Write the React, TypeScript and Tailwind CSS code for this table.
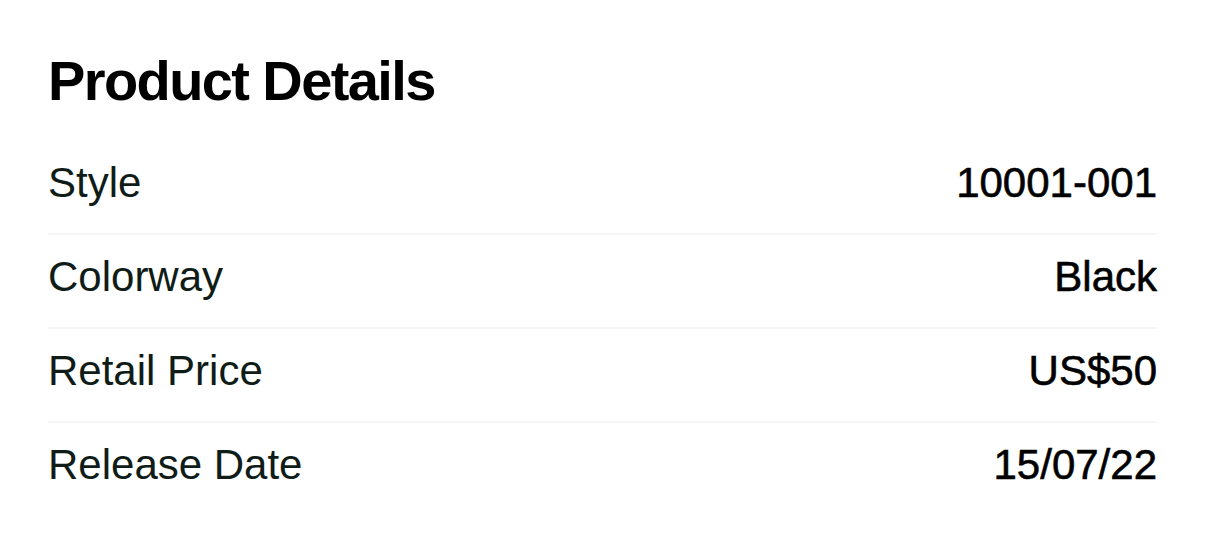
import React from "react";

const rows = [
  ["Style", "10001-001"],
  ["Colorway", "Black"],
  ["Retail Price", "US$50"],
  ["Release Date", "15/07/22"],
];

export default function App() {
  return (
    <div
      className="w-[1206px] h-[543px] bg-white pl-[48px] pr-[49px] pt-[51px]"
      style={{ fontFamily: "'Liberation Sans', Arial, sans-serif" }}
    >
      <h1 className="text-[56px] leading-[60px] font-bold text-black tracking-[-1.6px]">
        Product Details
      </h1>
      <div className="mt-[30px]">
        {rows.map(([k, v], i) => (
          <div
            key={k}
            className={`flex items-start justify-between pt-[18px] pb-[26px] ${
              i < rows.length - 1 ? "border-b-2 border-[#f4f5f5]" : ""
            }`}
          >
            <span className="text-[42px] leading-[48px] text-[#0f1c17]">{k}</span>
            <span className="text-[42px] leading-[48px] text-black [-webkit-text-stroke:0.6px_#000]">
              {v}
            </span>
          </div>
        ))}
      </div>
    </div>
  );
}
